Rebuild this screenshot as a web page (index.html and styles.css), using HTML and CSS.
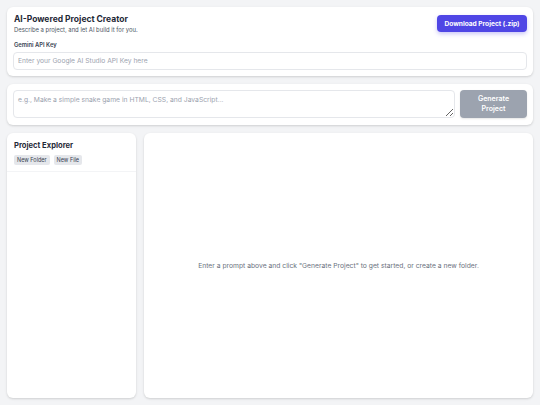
FILE: index.html
```html
<!DOCTYPE html>
<html>
<head>
    <title>AI-Powered Project Creator</title>
    <link rel="stylesheet" href="styles.css">
</head>
<body>
    <div class="app">
        <div class="card header">
            <div class="header-top">
                <div>
                    <h1>AI-Powered Project Creator</h1>
                    <p class="subtitle">Describe a project, and let AI build it for you.</p>
                </div>
                <button class="btn-download">Download Project (.zip)</button>
            </div>
            <label for="apiKey">Gemini API Key</label>
            <input type="text" id="apiKey" placeholder="Enter your Google AI Studio API Key here">
        </div>

        <div class="card prompt">
            <textarea id="prompt" placeholder="e.g., Make a simple snake game in HTML, CSS, and JavaScript..."></textarea>
            <button class="btn-generate" disabled>Generate Project</button>
        </div>

        <div class="workspace">
            <div class="card explorer">
                <div class="explorer-head">
                    <h2>Project Explorer</h2>
                    <div class="explorer-actions">
                        <button class="btn-small">New Folder</button>
                        <button class="btn-small">New File</button>
                    </div>
                </div>
                <div class="file-tree"></div>
            </div>
            <div class="card editor">
                <p class="empty">Enter a prompt above and click "Generate Project" to get started, or create a new folder.</p>
            </div>
        </div>
    </div>
</body>
</html>
```

FILE: styles.css
```css
* {
    box-sizing: border-box;
}

html, body {
    margin: 0;
    height: 100%;
}

body {
    background: #f3f4f6;
    font-family: Inter, "Noto Sans", sans-serif;
    color: #1f2937;
}

.app {
    height: 100%;
    padding: 7px;
    display: flex;
    flex-direction: column;
    gap: 8px;
}

.card {
    background: #fff;
    border-radius: 6px;
    box-shadow: 0 1px 3px rgba(0, 0, 0, 0.1), 0 1px 2px rgba(0, 0, 0, 0.06);
}

.header {
    padding: 6px 6px 6px 7px;
    display: flex;
    flex-direction: column;
}

.header-top {
    display: flex;
    justify-content: space-between;
    align-items: flex-start;
}

h1 {
    margin: 0;
    font-size: 8.5px;
    line-height: 12px;
    font-weight: 700;
    color: #1f2937;
}

.subtitle {
    margin: 0;
    font-size: 5.9px;
    line-height: 9px;
    color: #4b5563;
}

.btn-download {
    margin-top: 2px;
    background: #4f46e5;
    color: #fff;
    border: none;
    border-radius: 4px;
    font-family: inherit;
    font-size: 6.6px;
    font-weight: 700;
    padding: 0 6px;
    width: 90px;
    height: 17px;
    box-shadow: 0 2px 4px rgba(79, 70, 229, 0.3);
}

label {
    margin-top: 6px;
    font-size: 5.8px;
    line-height: 9px;
    font-weight: 600;
    color: #374151;
}

input {
    margin-top: 3px;
    margin-left: -1px;
    height: 18px;
    border: 1px solid #e5e7eb;
    border-radius: 4px;
    padding: 0 4px;
    font-family: inherit;
    font-size: 6.7px;
    outline: none;
}

input::placeholder,
textarea::placeholder {
    color: #9ca3af;
}

.prompt {
    padding: 6px 6px 7px 6px;
    display: flex;
    gap: 5px;
}

textarea {
    flex: 1;
    height: 28px;
    border: 1px solid #e5e7eb;
    border-radius: 4px;
    padding: 4px 4px;
    font-family: inherit;
    font-size: 6.75px;
    resize: vertical;
    outline: none;
}

.btn-generate {
    width: 67px;
    height: 28px;
    background: #9ca3af;
    color: #fff;
    border: none;
    border-radius: 4px;
    font-family: inherit;
    font-size: 7px;
    font-weight: 600;
    line-height: 10px;
    padding: 0 14px;
    box-shadow: 0 1px 2px rgba(0, 0, 0, 0.1);
}

.workspace {
    flex: 1;
    display: flex;
    gap: 8px;
    min-height: 0;
}

.explorer {
    width: 129px;
    display: flex;
    flex-direction: column;
}

.explorer-head {
    padding: 7px 6px 6px 7px;
    border-bottom: 1px solid #f3f4f6;
}

h2 {
    margin: 0;
    font-size: 7.6px;
    line-height: 12px;
    font-weight: 700;
    color: #1f2937;
}

.explorer-actions {
    margin-top: 3px;
    display: flex;
    gap: 4px;
}

.btn-small {
    background: #e5e7eb;
    color: #374151;
    border: none;
    border-radius: 2px;
    font-family: inherit;
    font-size: 5.5px;
    height: 10px;
    padding: 0 3px;
}

.file-tree {
    flex: 1;
}

.editor {
    flex: 1;
    display: flex;
    align-items: center;
    justify-content: center;
}

.empty {
    margin: 0;
    font-size: 6.75px;
    color: #6b7280;
}
```
